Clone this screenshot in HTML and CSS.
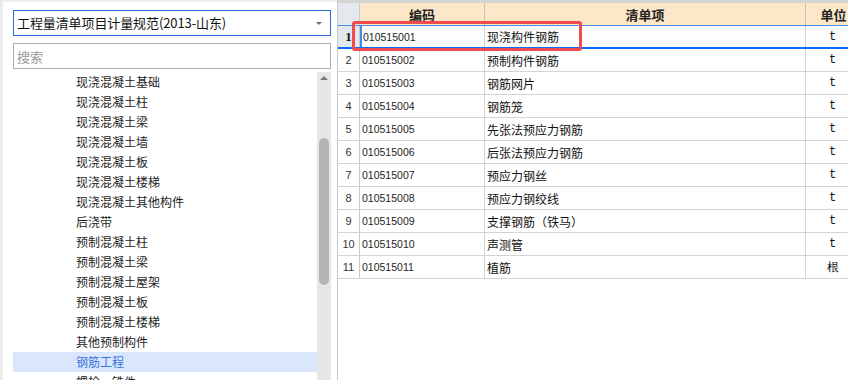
FILE: index.html
```html
<!DOCTYPE html>
<html lang="zh">
<head>
<meta charset="utf-8">
<title>清单</title>
<link rel="stylesheet" href="styles.css">
</head>
<body>
<div class="app">
  <aside class="left">
    <div class="combo"><span class="combo-text">工程量清单项目计量规范(2013-山东)</span><i class="caret"></i></div>
    <div class="search"><span class="ph">搜索</span></div>
    <div class="tree">
      <ul class="items">
        <li>现浇混凝土基础</li>
        <li>现浇混凝土柱</li>
        <li>现浇混凝土梁</li>
        <li>现浇混凝土墙</li>
        <li>现浇混凝土板</li>
        <li>现浇混凝土楼梯</li>
        <li>现浇混凝土其他构件</li>
        <li>后浇带</li>
        <li>预制混凝土柱</li>
        <li>预制混凝土梁</li>
        <li>预制混凝土屋架</li>
        <li>预制混凝土板</li>
        <li>预制混凝土楼梯</li>
        <li>其他预制构件</li>
        <li class="sel">钢筋工程</li>
        <li>螺栓、铁件</li>
      </ul>
      <div class="vscroll"><i class="up"></i><div class="thumb"></div></div>
    </div>
  </aside>
  <main class="right">
    <div class="table">
      <div class="row head">
        <div class="num"></div>
        <div class="cell c">编码</div>
        <div class="cell c">清单项</div>
        <div class="cell c">单位</div>
      </div>
      <div class="row cur">
        <div class="num b">1</div>
        <div class="cell code">010515001</div>
        <div class="cell name">现浇构件钢筋</div>
        <div class="cell unit">t</div>
      </div>
      <div class="row"><div class="num">2</div><div class="cell code">010515002</div><div class="cell name">预制构件钢筋</div><div class="cell unit">t</div></div>
      <div class="row"><div class="num">3</div><div class="cell code">010515003</div><div class="cell name">钢筋网片</div><div class="cell unit">t</div></div>
      <div class="row"><div class="num">4</div><div class="cell code">010515004</div><div class="cell name">钢筋笼</div><div class="cell unit">t</div></div>
      <div class="row"><div class="num">5</div><div class="cell code">010515005</div><div class="cell name">先张法预应力钢筋</div><div class="cell unit">t</div></div>
      <div class="row"><div class="num">6</div><div class="cell code">010515006</div><div class="cell name">后张法预应力钢筋</div><div class="cell unit">t</div></div>
      <div class="row"><div class="num">7</div><div class="cell code">010515007</div><div class="cell name">预应力钢丝</div><div class="cell unit">t</div></div>
      <div class="row"><div class="num">8</div><div class="cell code">010515008</div><div class="cell name">预应力钢绞线</div><div class="cell unit">t</div></div>
      <div class="row"><div class="num">9</div><div class="cell code">010515009</div><div class="cell name">支撑钢筋（铁马）</div><div class="cell unit">t</div></div>
      <div class="row"><div class="num">10</div><div class="cell code">010515010</div><div class="cell name">声测管</div><div class="cell unit">t</div></div>
      <div class="row"><div class="num">11</div><div class="cell code">010515011</div><div class="cell name">植筋</div><div class="cell unit">根</div></div>
    </div>
    <div class="mark"></div>
  </main>
</div>
</body>
</html>
```

FILE: styles.css
```css
* { box-sizing: border-box; margin: 0; padding: 0; }
html, body { width: 848px; height: 380px; overflow: hidden; background: #fff; }
body { font-family: "Noto Sans CJK SC", "Liberation Sans", sans-serif; color: #1e1e1e; }

.app { display: flex; width: 848px; height: 380px; }

.left {
  width: 337px;
  flex: none;
  display: flex;
  flex-direction: column;
  padding: 8px 6px 0 10px;
  border-left: 3px solid #ececec;
  border-top: 2px solid #eeeeee;
  background: #fff;
}

.combo {
  height: 26px;
  width: 318px;
  border: 1px solid #2b6cd8;
  display: flex;
  align-items: center;
  padding-left: 3px;
  position: relative;
}
.combo-text { font-size: 13px; color: #111; line-height: 24px; letter-spacing: -0.1px; }
.caret {
  position: absolute;
  right: 8px;
  top: 11px;
  width: 0; height: 0;
  border-left: 3px solid transparent;
  border-right: 3px solid transparent;
  border-top: 3px solid #6e6e6e;
}

.search {
  margin-top: 7px;
  height: 26px;
  width: 318px;
  border: 1px solid #ababab;
  display: flex;
  align-items: center;
  padding-left: 3px;
}
.ph { font-size: 13px; color: #9a9a9a; }

.tree {
  margin-top: 3px;
  display: flex;
  flex: 1;
  width: 318px;
  overflow: hidden;
}
.items { list-style: none; width: 304px; flex: none; }
.items li {
  height: 20px;
  line-height: 20px;
  font-size: 12px;
  padding-left: 63px;
  color: #1e1e1e;
  white-space: nowrap;
}
.items li.sel { background: #d9e6fc; color: #3a74dc; }

.vscroll {
  width: 14px;
  flex: none;
  background: #e6e6e6;
  display: flex;
  flex-direction: column;
  align-items: center;
}
.up {
  margin-top: 4px;
  width: 0; height: 0;
  border-left: 4px solid transparent;
  border-right: 4px solid transparent;
  border-bottom: 4px solid #7a7a7a;
}
.thumb {
  margin-top: 58px;
  width: 10px;
  height: 147px;
  border-radius: 5px;
  background: #b2b4b8;
}

.right {
  flex: 1;
  position: relative;
  border-left: 1px solid #c9c9c9;
  overflow: hidden;
  background: #fff;
}

.table { width: 524px; }
.row {
  display: grid;
  grid-template-columns: 22px 125px 321px 56px;
  height: 23px;
  border-bottom: 1px solid #d4d4d4;
}
.row.head {
  height: 26px;
  border-top: 3px solid #d5d5d5;
  border-bottom: 1px solid #4a90e2;
  background: #fde7c9;
}
.row.head .num { background: #e5e9ef; }
.row.head .cell {
  font-size: 13px;
  font-weight: bold;
  color: #222;
  border-right: 1px solid #c9c2b6;
}
.num {
  border-right: 1px solid #c9c9c9;
  display: flex;
  align-items: center;
  justify-content: center;
  font-family: "Liberation Sans", "DejaVu Sans", sans-serif;
  font-size: 11px;
  color: #333;
}
.num.b { background: #e3e7ee; font-weight: bold; font-family: "Liberation Serif", serif; font-size: 13px; color: #111; }
.cell {
  border-right: 1px solid #d4d4d4;
  display: flex;
  align-items: center;
  white-space: nowrap;
  overflow: hidden;
}
.cell.c { justify-content: center; }
.code { font-family: "Liberation Sans", sans-serif; font-size: 10.5px; padding-left: 2px; color: #1e1e1e; }
.name { font-size: 12px; padding-left: 2px; color: #111; }
.unit { font-family: "Liberation Mono", monospace; font-size: 12px; justify-content: center; padding-right: 2px; color: #111; }

.row.cur { border-bottom: 2px solid #0a6cff; background: #fdfdfd; }
.row.cur .code { border-left: 2px solid #3a8ef0; padding-left: 1px; }

.mark {
  position: absolute;
  left: 14px;
  top: 21px;
  width: 230px;
  height: 30px;
  border: 3px solid #f04b4d;
  border-radius: 3px;
}
```
